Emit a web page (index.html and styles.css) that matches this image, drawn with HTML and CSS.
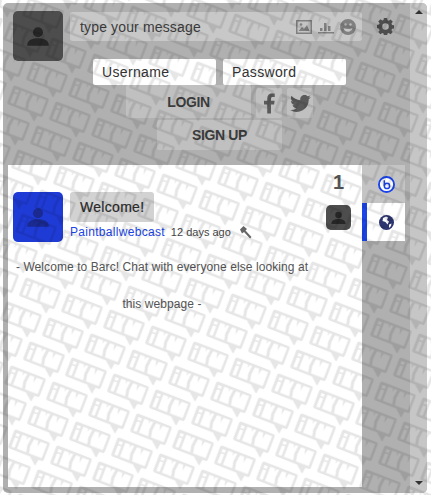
FILE: index.html
```html
<!DOCTYPE html>
<html lang="en">
<head>
    <meta charset="UTF-8">
    <title>Barc</title>
    <link rel="stylesheet" href="styles.css">
</head>
<body>
    <div class="frame">
        <div class="main">
            <div class="top">
                <div class="avatar avatar-big">
                    <svg viewBox="0 0 24 24" class="user"><circle cx="12" cy="8.5" r="4.6"/><path d="M2 21c0-5 4-7 10-7s10 2 10 7z"/></svg>
                </div>
                <div class="top-right">
                    <div class="msg-row">
                        <div class="msg-box">
                            <span class="msg-text">type your message</span>
                            <span class="msg-icons">
                                <svg width="16" height="14" viewBox="0 0 16 14"><path fill="#c4c4c4" d="M0 0h16v14H0z"/><path d="M0 0h16v14H0zM1.500 1.500v11h13v-11z" fill-rule="evenodd"/><path d="M2.500 11l3.500-4 2 2 3-4 2.500 6z"/><circle cx="5" cy="4.500" r="1.300"/></svg>
                                <svg width="16" height="14" viewBox="0 0 16 14"><path d="M0 12h16v1.500H0zM2 8h2.500v3H2zM6 3h2.500v8H6zM10 6h2.500v5H10z"/></svg>
                                <svg width="16" height="16" viewBox="0 0 16 16"><path fill-rule="evenodd" d="M8 0a8 8 0 1 1 0 16A8 8 0 0 1 8 0zM3.500 9c.5 2.500 2.300 3.800 4.500 3.800s4-1.300 4.500-3.800c-1.500.8-3 1.100-4.500 1.100S5 9.800 3.500 9z"/><circle cx="5.500" cy="5.500" r="1.200" fill="#bbb"/><circle cx="10.500" cy="5.500" r="1.200" fill="#bbb"/></svg>
                            </span>
                        </div>
                        <svg class="gear" width="17" height="17" viewBox="0 0 18 18"><path fill-rule="evenodd" d="M7.300 0h3.400l.4 2.400 1.300.6 2-1.400 2.300 2.400-1.400 1.900.6 1.400 2.100.4v3.400l-2.100.4-.6 1.400 1.400 1.900-2.300 2.400-2-1.400-1.300.6-.4 2.100H7.300l-.4-2.100-1.300-.6-2 1.400-2.300-2.400 1.400-1.900-.6-1.400L0 10.700V7.300l2.100-.4.6-1.400-1.400-1.900 2.300-2.400 2 1.400 1.300-.6zM9 5.500a3.500 3.500 0 1 0 0 7 3.500 3.500 0 0 0 0-7z"/></svg>
                    </div>
                    <div class="login-row">
                        <input class="field" placeholder="Username">
                        <input class="field" placeholder="Password">
                    </div>
                    <div class="btn-row">
                        <div class="btn btn-login">LOGIN</div>
                        <div class="btn btn-social"><svg width="11" height="21" viewBox="0 0 12 22"><path d="M3.500 22V12H0V8h3.500V5.500C3.500 2 5.500 0 8.700 0c1.300 0 2.500.1 3 .2v3.600H9.600C8 3.800 7.600 4.500 7.600 5.800V8h4l-.6 4H7.600v10z"/></svg></div>
                        <div class="btn btn-social"><svg width="21" height="17" viewBox="0 0 22 18"><path d="M22 2.100c-.8.400-1.700.6-2.600.7.900-.6 1.700-1.400 2-2.500-.9.500-1.800.9-2.900 1.100A4.500 4.500 0 0 0 10.800 5.500C7 5.300 3.700 3.500 1.500.8.300 2.900.9 5.500 2.900 6.800c-.7 0-1.400-.2-2-.6 0 2.200 1.500 4 3.600 4.500-.7.200-1.400.2-2 .1.600 1.800 2.200 3.100 4.200 3.100A9 9 0 0 1 0 15.800 12.800 12.800 0 0 0 19.700 4.500c.9-.6 1.700-1.400 2.300-2.400z"/></svg></div>
                    </div>
                    <div class="btn btn-signup">SIGN UP</div>
                </div>
            </div>
            <div class="body">
                <div class="chat">
                    <div class="count">1</div>
                    <div class="chat-row">
                        <div class="post">
                            <div class="avatar avatar-blue">
                                <svg viewBox="0 0 24 24" class="user"><circle cx="12" cy="8.500" r="4.600"/><path d="M2 21c0-5 4-7 10-7s10 2 10 7z"/></svg>
                            </div>
                            <div class="post-info">
                                <div class="bubble">Welcome!</div>
                                <div class="meta">
                                    <a class="name">Paintballwebcast</a>
                                    <span class="time">12 days ago</span>
                                    <svg class="hammer" width="13" height="13" viewBox="0 0 13 13"><path d="M1 3.500 4.500 0l3.500 3-1.500 1.500 6 6.500-1.500 1.500-6-6.500L3 7.500z"/></svg>
                                </div>
                            </div>
                        </div>
                        <div class="avatar avatar-small">
                            <svg viewBox="0 0 24 24" class="user"><circle cx="12" cy="8.500" r="4.600"/><path d="M2 21c0-5 4-7 10-7s10 2 10 7z"/></svg>
                        </div>
                    </div>
                    <p class="notice">- Welcome to Barc! Chat with everyone else looking at this webpage -</p>
                </div>
                <div class="tabs">
                    <div class="tab">
                        <svg width="17" height="17" viewBox="0 0 18 18"><circle cx="9" cy="9" r="8" fill="#fff" stroke="#1a44e8" stroke-width="2"/><circle cx="9.500" cy="10.500" r="2.800" fill="none" stroke="#1a44e8" stroke-width="1.600"/><path d="M6.700 4.500v6" stroke="#1a44e8" stroke-width="1.600"/></svg>
                    </div>
                    <div class="tab tab-on">
                        <svg width="15" height="15" viewBox="0 0 15 15"><circle cx="7.500" cy="7.500" r="7.500" fill="#2c3570"/><path d="M4 3l3-1.500 2 1-1 2.500 2 1.500-1.500 3-2-2.500L3.500 6zM10 9.500l2.500-1-.5 2.500-2 2z" fill="#fff"/></svg>
                    </div>
                </div>
            </div>
        </div>
        <div class="scrollbar">
            <span class="arrow arrow-up"></span>
            <span class="arrow arrow-down"></span>
        </div>
    </div>

    <!-- tiled bubbles go over everything, the panels show through -->
    <svg class="pattern" width="431" height="495">
        <defs>
            <g id="bub">
                <g transform="rotate(21)">
                    <path fill-rule="evenodd" d="M-17-10h34a2 2 0 0 1 2 2V8a2 2 0 0 1-2 2H14l-1 7-8-7h-22a2 2 0 0 1-2-2V-8a2 2 0 0 1 2-2z
                        M-16-7v3h3.500v-3z
                        M-16-2.500V7.500h3.500V-2.500z
                        M-10-7.500V7.500H0L-1.500 1-.5-7.500H-3.500l-.5 3.500-1-3.500z
                        M2.500-7.500 1.500 1 3 7.500H16.500V-7.500H9.500l-1 6-1.500-6z"/>
                </g>
            </g>
            <!-- lattice steps (42,16) and (-19,24), the group undoes the skew -->
            <pattern id="tile" width="42" height="24" patternUnits="userSpaceOnUse" patternTransform="matrix(1 .381 -.7917 1 238.500 353.300)">
                <g transform="matrix(.7683 -.2927 .6083 .7683 0 0)">
                    <use href="#bub" x="11.500" y="20"/>
                    <use href="#bub" x="53.500" y="36"/>
                    <use href="#bub" x="-30.500" y="4"/>
                    <use href="#bub" x="-7.500" y="44"/>
                    <use href="#bub" x="30.500" y="-4"/>
                    <use href="#bub" x="34.500" y="60"/>
                    <use href="#bub" x="-11.500" y="-20"/>
                    <use href="#bub" x="72.500" y="12"/>
                    <use href="#bub" x="-49.500" y="28"/>
                </g>
            </pattern>
        </defs>
        <rect width="431" height="495" fill="url(#tile)" opacity=".1"/>
    </svg>
</body>
</html>
```

FILE: styles.css
```css
body {
    margin: 0;
    height: 495px;
    background: #fff;
    font-family: "Liberation Sans", Arial, sans-serif;
    overflow: hidden;
    color: #333;
}

.frame {
    display: flex;
    margin: 3px 4px 0 3px;
    height: 490px;
    background: #b0b0b0;
    border-radius: 5px;
    overflow: hidden;
}

.main {
    flex: 1;
    display: flex;
    flex-direction: column;
    padding: 0 0 6px 5px;
    min-width: 0;
}

.scrollbar {
    width: 17px;
    background: #c6c6c6;
    display: flex;
    flex-direction: column;
    justify-content: space-between;
    align-items: center;
    padding: 7px 0 8px;
    box-sizing: border-box;
}

.arrow {
    width: 0;
    height: 0;
    border-left: 4px solid transparent;
    border-right: 4px solid transparent;
}

.arrow-up {
    border-bottom: 4px solid #333;
}

.arrow-down {
    border-top: 4px solid #333;
}

.top {
    display: flex;
    gap: 7px;
    padding: 8px 0 0 5px;
    height: 162px;
    box-sizing: border-box;
}

.avatar {
    display: flex;
    align-items: center;
    justify-content: center;
    flex-shrink: 0;
    background: #4d4d4d;
    border-radius: 5px;
}

.user {
    fill: #262626;
}

.avatar-big {
    width: 50px;
    height: 50px;
}

.avatar-big .user {
    width: 26px;
    height: 26px;
}

.top-right {
    display: flex;
    flex-direction: column;
    align-items: flex-start;
}

.msg-row {
    display: flex;
    align-items: center;
    gap: 15px;
    margin-top: 1px;
}

.msg-box {
    display: flex;
    align-items: center;
    justify-content: space-between;
    width: 292px;
    height: 29px;
    padding: 0 6px 0 10px;
    box-sizing: border-box;
    background: #c8c8c8;
    border-radius: 3px;
}

.msg-text {
    font-size: 14px;
    letter-spacing: .15px;
    color: #3c3c3c;
}

.msg-icons {
    display: flex;
    align-items: center;
    gap: 6px;
    fill: #808080;
}

.gear {
    fill: #4d4d4d;
}

.login-row {
    display: flex;
    gap: 7px;
    margin: 18px 0 0 23px;
}

.field {
    width: 123px;
    height: 26px;
    padding: 0 9px;
    box-sizing: border-box;
    border: 0;
    border-radius: 2px;
    background: #fff;
    font: 14px "Liberation Sans", Arial, sans-serif;
    letter-spacing: .35px;
}

.field::placeholder {
    color: #333;
    opacity: 1;
}

.btn {
    display: flex;
    align-items: center;
    justify-content: center;
    height: 33px;
    background: #c0c0c0;
    border-radius: 2px;
    font-size: 14px;
    font-weight: bold;
    letter-spacing: -.4px;
    color: #3c3c3c;
}

.btn-row {
    display: flex;
    gap: 5px;
    margin: 0 0 0 56px;
}

.btn-login {
    width: 125px;
}

.btn-social {
    width: 26px;
    height: 30px;
    margin-top: 3px;
    fill: #5a5a5a;
}

.btn-signup {
    width: 125px;
    height: 30px;
    margin: 2px 0 0 87px;
}

.body {
    flex: 1;
    display: flex;
    min-height: 0;
}

.chat {
    width: 354px;
    background: #fff;
    box-sizing: border-box;
    padding: 8px 0 0 5px;
}

.count {
    text-align: right;
    padding-right: 18px;
    font-size: 20px;
    font-weight: bold;
    color: #555;
    line-height: 19px;
}

.chat-row {
    display: flex;
    justify-content: space-between;
    align-items: flex-start;
    padding-right: 11px;
}

.post {
    display: flex;
    gap: 7px;
}

.avatar-blue {
    width: 50px;
    height: 50px;
    background: #1f3bd6;
}

.avatar-blue .user {
    width: 26px;
    height: 26px;
    fill: #1a2a90;
}

.avatar-small {
    width: 25px;
    height: 25px;
    margin-top: 13px;
}

.avatar-small .user {
    width: 17px;
    height: 17px;
}

.bubble {
    display: inline-block;
    padding: 0 10px;
    line-height: 30px;
    background: #d2d2d2;
    border-radius: 3px;
    font-size: 14px;
    letter-spacing: .3px;
    color: #2a2a2a;
    -webkit-text-stroke: .2px #2a2a2a;
}

.meta {
    display: flex;
    align-items: center;
    gap: 6px;
    margin-top: 3px;
    white-space: nowrap;
}

.name {
    font-size: 12px;
    letter-spacing: .3px;
    color: #1a44e8;
}

.time {
    font-size: 11px;
    color: #444;
}

.hammer {
    fill: #666;
    margin-left: 2px;
}

.notice {
    width: 296px;
    margin: 7px 0 0 1px;
    font-size: 12px;
    letter-spacing: .08px;
    line-height: 37px;
    text-align: center;
    color: #555;
}

.tabs {
    width: 43px;
}

.tab {
    display: flex;
    align-items: center;
    justify-content: center;
    height: 38px;
    box-sizing: border-box;
    border-left: 5px solid transparent;
    background: #c4c4c4;
}

.tab-on {
    background: #fff;
    border-left-color: #1a44e8;
}

.pattern {
    position: absolute;
    top: 0;
    left: 0;
    pointer-events: none;
}
```
